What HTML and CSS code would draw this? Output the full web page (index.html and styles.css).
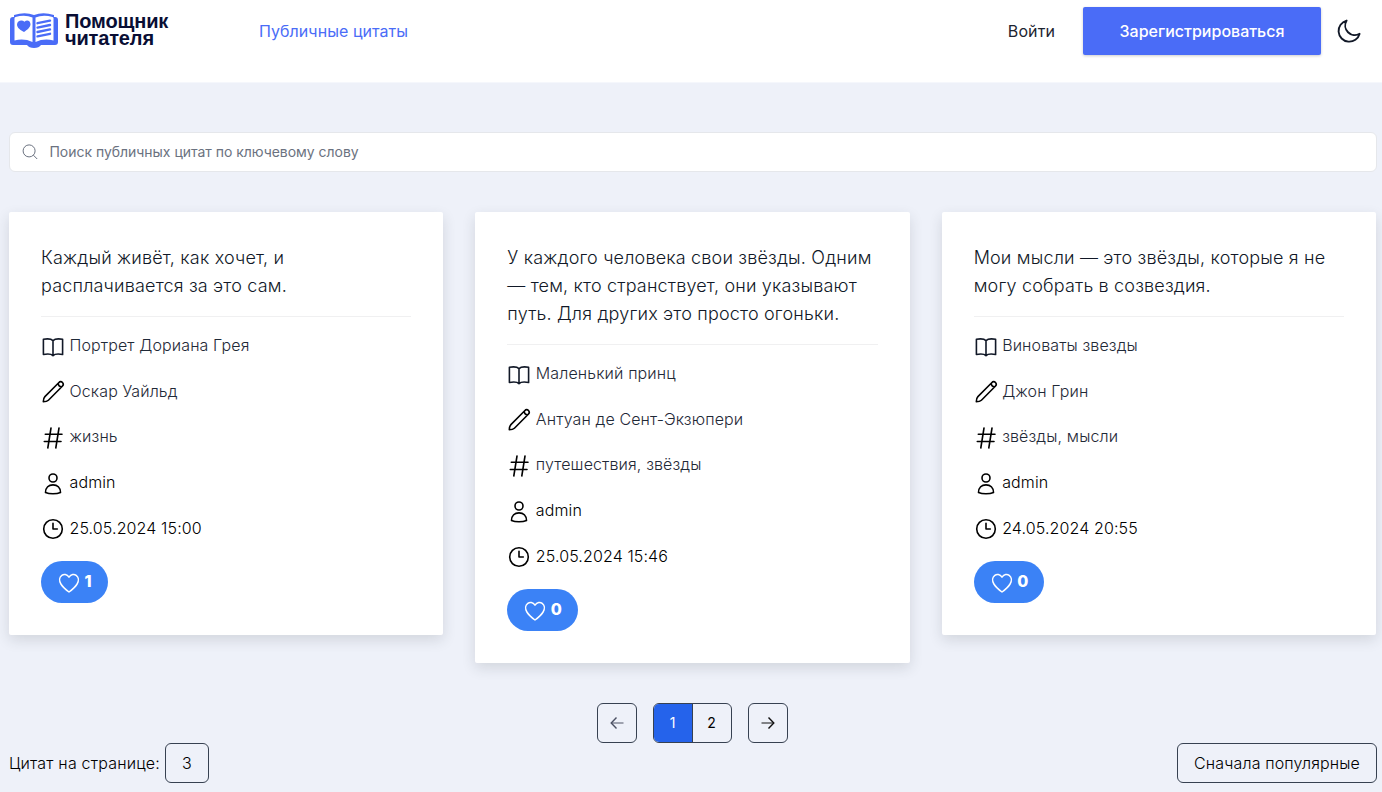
FILE: index.html
```
<!DOCTYPE html>
<html lang="ru">
<head>
<meta charset="utf-8">
<title>Помощник читателя</title>
<link rel="stylesheet" href="styles.css">
</head>
<body>
<svg class="defs" aria-hidden="true">
  <symbol id="book" viewBox="0 0 24 24"><path d="M12 5.6C10.700 4.300 7 3.500 2.400 4.300V19.500C6.500 18.800 10.500 19.100 12 20.600C13.500 19.100 17.500 18.800 21.600 19.500V4.300C17 3.500 13.300 4.300 12 5.600ZM12 5.600V20.500"/></symbol>
  <symbol id="pencil" viewBox="0 0 24 24"><path d="M2.300 21.800C2.300 19.500 2.700 17.800 3.900 16.600L17.700 2.700C19 1.400 20.300 1.300 21.500 2.500C22.700 3.700 22.600 5 21.300 6.300L7.400 20.200C6.200 21.400 4.500 21.800 2.300 21.800ZM17.300 3.300C17.300 5.300 18.700 6.700 20.700 6.700"/></symbol>
  <symbol id="hash" viewBox="0 0 24 24"><path d="M10 2L6.800 22M18 2L14.800 22M4.300 8.200H21M3.300 15.500H20"/></symbol>
  <symbol id="user" viewBox="0 0 24 24"><circle cx="12" cy="6" r="4"/><path d="M4.500 20.500C4.500 15.500 7.700 12.900 12 12.900S19.500 15.500 19.500 20.500C17.500 21.400 15 21.800 12 21.800S6.500 21.400 4.500 20.500Z"/></symbol>
  <symbol id="clock" viewBox="0 0 24 24"><circle cx="12" cy="12" r="9.300"/><path d="M12 6.300V12H16.300"/></symbol>
  <symbol id="heart" viewBox="0 0 24 24"><path d="M12 6.200C9.900 2.900 6.700 2.900 4.800 4.300C2.200 6.200 2 9.800 3.900 13C5.700 16 9 18.800 12 21C15 18.800 18.300 16 20.100 13C22 9.800 21.800 6.200 19.200 4.300C17.300 2.900 14.100 2.900 12 6.200Z"/></symbol>
</svg>

<header class="header">
  <a class="logo">
    <svg class="logo-mark" viewBox="0 0 48 36">
      <path class="logo-cover" d="M3 4H4V2Q15-1.500 24 2Q33-1.500 44 2V4H45Q48 4 48 7V29Q48 32 45 32H31Q29 35 24 35T17 32H3Q0 32 0 29V7Q0 4 3 4Z"/>
      <path class="logo-page" d="M5.500 4Q15 1.500 22.500 4.500V29Q14 25 4.500 27.500V5Q4.500 4.300 5.500 4ZM25.500 4.500Q33 1.500 42.500 4Q43.500 4.300 43.500 5V27.500Q34 25 25.500 29Z"/>
      <path class="logo-heart" d="M14.500 8.800C16.500 6.500 20 7 20.500 11C20.800 14 17 17 14 19C10.500 17 7 15 7 11.500C7.200 7.500 12 6.500 14.500 8.800Z"/>
      <path class="logo-lines" d="M27.500 10.200L40 7.600M27.500 14.600L40 12M27.500 19L40 16.400M27.500 23.400L40 20.800"/>
    </svg>
    <span class="logo-text">Помощник<br>читателя</span>
  </a>
  <nav class="nav"><a>Публичные цитаты</a></nav>
  <div class="account">
    <a class="login">Войти</a>
    <a class="register">Зарегистрироваться</a>
    <svg class="moon" viewBox="0 0 24 24"><path d="M10.200 1.500A10.300 10.300 0 1 0 22.700 14.200A9.200 9.200 0 0 1 10.200 1.500Z"/></svg>
  </div>
</header>

<main class="page">
  <label class="search">
    <svg class="search-icon" viewBox="0 0 16 16"><circle cx="7.100" cy="6.900" r="6"/><path d="M11.400 11.200L15.200 15"/></svg>
    <span>Поиск публичных цитат по ключевому слову</span>
  </label>

  <section class="cards">
    <article class="card">
      <p class="quote">Каждый живёт, как хочет, и расплачивается за это сам.</p>
      <ul class="details">
        <li class="soft"><svg class="icon"><use href="#book"/></svg>Портрет Дориана Грея</li>
        <li class="soft"><svg class="icon dark"><use href="#pencil"/></svg>Оскар Уайльд</li>
        <li class="soft"><svg class="icon dark"><use href="#hash"/></svg>жизнь</li>
        <li><svg class="icon dark"><use href="#user"/></svg>admin</li>
        <li><svg class="icon dark"><use href="#clock"/></svg>25.05.2024 15:00</li>
      </ul>
      <button class="like"><svg class="icon"><use href="#heart"/></svg>1</button>
    </article>
    <article class="card">
      <p class="quote">У каждого человека свои звёзды. Одним — тем, кто странствует, они указывают путь. Для других это просто огоньки.</p>
      <ul class="details">
        <li class="soft"><svg class="icon"><use href="#book"/></svg>Маленький принц</li>
        <li class="soft"><svg class="icon dark"><use href="#pencil"/></svg>Антуан де Сент-Экзюпери</li>
        <li class="soft"><svg class="icon dark"><use href="#hash"/></svg>путешествия, звёзды</li>
        <li><svg class="icon dark"><use href="#user"/></svg>admin</li>
        <li><svg class="icon dark"><use href="#clock"/></svg>25.05.2024 15:46</li>
      </ul>
      <button class="like"><svg class="icon"><use href="#heart"/></svg>0</button>
    </article>
    <article class="card">
      <p class="quote">Мои мысли — это звёзды, которые я не могу собрать в созвездия.</p>
      <ul class="details">
        <li class="soft"><svg class="icon"><use href="#book"/></svg>Виноваты звезды</li>
        <li class="soft"><svg class="icon dark"><use href="#pencil"/></svg>Джон Грин</li>
        <li class="soft"><svg class="icon dark"><use href="#hash"/></svg>звёзды, мысли</li>
        <li><svg class="icon dark"><use href="#user"/></svg>admin</li>
        <li><svg class="icon dark"><use href="#clock"/></svg>24.05.2024 20:55</li>
      </ul>
      <button class="like"><svg class="icon"><use href="#heart"/></svg>0</button>
    </article>
  </section>

  <nav class="pagination">
    <a class="arrow muted"><svg viewBox="0 0 14 12"><path class="shaft" d="M2 6H13.500"/><path d="M6.500 .5L1.200 6L6.500 11.500"/></svg></a>
    <div class="pages"><a class="current">1</a><a>2</a></div>
    <a class="arrow"><svg viewBox="0 0 14 12"><path class="shaft" d="M.5 6H12"/><path d="M7.500 .5L12.800 6L7.500 11.500"/></svg></a>
  </nav>

  <div class="toolbar">
    <div class="per-page">Цитат на странице: <button class="select">3</button></div>
    <button class="select sort">Сначала популярные</button>
  </div>
</main>
</body>
</html>
```
FILE: styles.css
```
* { box-sizing: border-box; }
body {
  margin: 0;
  height: 792px;
  overflow: hidden;
  background: #eef1f9;
  color: #000;
  font: 300 16px/24px Inter, sans-serif;
}
.defs { display: none; }
svg { fill: none; flex: none; }
button { font: inherit; color: inherit; letter-spacing: inherit; }

.header {
  height: 83px;
  padding: 7px 21px 0 10px;
  background: #fff;
  border-bottom: 1px solid #f5f7fc;
  display: flex;
  align-items: flex-start;
}
.logo { display: flex; width: 249px; gap: 7px; padding-top: 6px; }
.logo-mark { width: 48px; height: 36px; }
.logo-cover, .logo-heart { fill: #4a6cf7; }
.logo-page { fill: #fff; }
.logo-lines { stroke: #4a6cf7; stroke-width: 2.4; stroke-linecap: round; }
.logo-text {
  color: #090e34;
  font: 700 20px/17px "Liberation Sans", sans-serif;
  letter-spacing: -.15px;
}
.nav { flex: 1; line-height: 48px; color: #4a6cf7; font-weight: 400; letter-spacing: .05px; }
.account { display: flex; align-items: center; }
.login { color: #1d2430; font-weight: 400; letter-spacing: .1px; }
.register {
  width: 238px;
  height: 48px;
  margin: 0 15px 0 28px;
  border-radius: 2px;
  background: #4a6cf7;
  box-shadow: 0 1px 3px rgba(0, 0, 0, .2);
  color: #fff;
  font-weight: 500;
  line-height: 48px;
  text-align: center;
}
.moon { width: 25px; height: 25px; stroke: #111827; stroke-width: 1.8; stroke-linejoin: round; }

.page { padding: 49px 5px 0 9px; }
.search {
  display: flex;
  align-items: center;
  gap: 11.500px;
  height: 40px;
  padding-left: 12px;
  border: 1px solid #e5e7eb;
  border-radius: 6px;
  background: #fff;
  color: #6b7280;
  font-size: 14px;
  font-weight: 400;
  letter-spacing: -.03px;
}
.search-icon { width: 16px; height: 16px; stroke: #6b7280; }

.cards {
  display: grid;
  grid-template-columns: repeat(3, 1fr);
  gap: 32px;
  align-items: start;
  margin: 40px 1px 0 0;
}
.card {
  padding: 32px;
  border-radius: 2px;
  background: #fff;
  box-shadow: 0 5px 14px rgba(45, 50, 60, .14);
}
.quote {
  margin: 0;
  padding-bottom: 16px;
  border-bottom: 1px solid #f0f0f1;
  color: #111827;
  font-size: 18px;
  line-height: 28px;
  letter-spacing: .17px;
}
.details { margin: 0; padding: 5.200px 0 0; list-style: none; letter-spacing: .12px; }
.details li { display: flex; align-items: center; gap: 4.500px; height: 45.700px; }
.details .icon { margin-top: 3px; }
.soft { color: #1f2937; }
.icon { width: 24px; height: 24px; stroke: #111827; stroke-width: 1.6; stroke-linejoin: round; stroke-linecap: round; }
.dark { stroke: #000; }
.like {
  display: flex;
  align-items: center;
  gap: 3.500px;
  height: 42px;
  margin-top: 10.300px;
  padding: 0 16px;
  border: 0;
  border-radius: 21px;
  background: #3b82f6;
  color: #fff;
  font-weight: 800;
  line-height: 24px;
  padding-bottom: 2px;
}
.like .icon { margin-top: 4px; stroke: #fff; stroke-width: 1.500; }

.pagination {
  display: flex;
  justify-content: center;
  gap: 16px;
  margin: 40px 2px 0 0;
}
.arrow, .pages { height: 40px; border: 1px solid #374151; border-radius: 6px; }
.arrow { width: 40px; display: flex; align-items: center; justify-content: center; }
.arrow svg { width: 14px; height: 12px; stroke: #111; stroke-width: 1.400; }
.arrow.muted svg { stroke: #4b5063; }
.arrow .shaft { opacity: .7; }
.pages { display: flex; width: 79px; overflow: hidden; font-size: 14px; font-weight: 400; line-height: 38px; text-align: center; }
.pages a { flex: 1; }
.pages .current { background: #2563eb; color: #fff; border-right: 1px solid #374151; }

.toolbar { display: flex; justify-content: space-between; letter-spacing: .2px; }
.per-page { display: flex; align-items: center; gap: 5px; }
.select {
  height: 40px;
  padding: 0 16px;
  border: 1px solid #374151;
  border-radius: 6px;
  background: none;
}
.per-page .select { width: 44px; }
.sort { letter-spacing: .15px; }
```
